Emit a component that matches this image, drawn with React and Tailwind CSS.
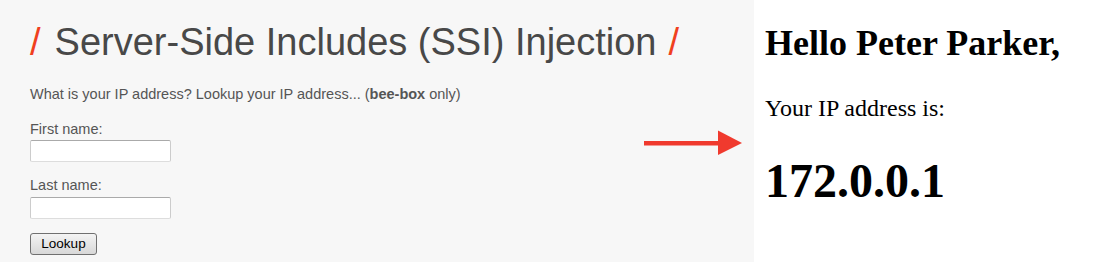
export default function App() {
  return (
    <div className="flex w-[1098px] h-[262px] overflow-hidden">
      {/* bWAPP page */}
      <div className="relative w-[754px] shrink-0 bg-[#f7f7f7] pl-[30px] pt-[20px] font-['Liberation_Sans',Arial,sans-serif] text-[#555]">
        <h1 className="flex items-baseline text-[38px] leading-[44px] text-[#484848] whitespace-nowrap">
          <span className="text-[#f0401e] mr-[14px]">/</span>
          <span>Server-Side Includes (SSI) Injection</span>
          <span className="text-[#f0401e] ml-[12px]">/</span>
        </h1>
        <p className="mt-[22px] text-[14.5px] leading-[16px]">
          What is your IP address? Lookup your IP address... (<b>bee-box</b> only)
        </p>
        <form className="mt-[19px] text-[14.5px] leading-[16px]" onSubmit={(e) => e.preventDefault()}>
          <label className="block">First name:</label>
          <input className="mt-[3px] block w-[141px] h-[22px] bg-white border border-t-[#aaa] border-x-[#ccc] border-b-[#ddd] rounded-[2px]" />
          <label className="block mt-[15px]">Last name:</label>
          <input className="mt-[4px] block w-[141px] h-[22px] bg-white border border-t-[#aaa] border-x-[#ccc] border-b-[#ddd] rounded-[2px]" />
          <button className="mt-[14px] block w-[67px] h-[22px] text-[13.5px] text-black border border-[#707070] rounded-[3px] bg-gradient-to-b from-[#f4f4f4] to-[#d8d8d8]">
            Lookup
          </button>
        </form>
        <svg className="absolute left-[644px] top-[130px]" width="100" height="26" viewBox="0 0 100 26">
          <rect x="0" y="11" width="76" height="4.5" fill="#f03a2e" />
          <polygon points="74,0.5 98,13 74,25" fill="#f03a2e" />
        </svg>
      </div>
      {/* result page */}
      <div className="flex-1 bg-white pl-[11px] font-['Liberation_Serif','Times_New_Roman',serif] text-black">
        <h1 className="mt-[23px] text-[36px] leading-[40px] font-bold whitespace-nowrap">Hello Peter Parker,</h1>
        <p className="mt-[31px] text-[24px] leading-[28px] whitespace-nowrap">Your IP address is:</p>
        <h1 className="mt-[31px] text-[48px] leading-[56px] font-bold">172.0.0.1</h1>
      </div>
    </div>
  )
}
